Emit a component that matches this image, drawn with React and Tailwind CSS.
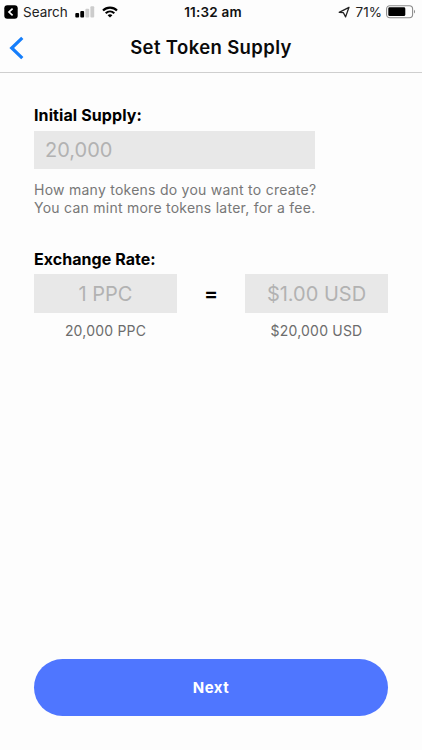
import { useState } from "react";

function SignalIcon() {
  return (
    <svg width="20" height="12" viewBox="0 0 20 12">
      <rect x="0.3" y="7" width="3.8" height="4.6" rx="1" fill="#000" />
      <rect x="5.3" y="5" width="3.8" height="6.6" rx="1" fill="#000" />
      <rect x="10.4" y="2.7" width="3.8" height="8.9" rx="1" fill="#ccc" />
      <rect x="15.4" y="0.3" width="3.8" height="11.3" rx="1" fill="#ccc" />
    </svg>
  );
}

function WifiIcon() {
  return (
    <svg width="16" height="12" viewBox="0 0 16 12" fill="none" stroke="#000" strokeWidth="2.1">
      <path d="M1 4.6 C4.9 0.6 11.1 0.6 15 4.6" />
      <path d="M3.7 7.3 C6.2 4.9 9.8 4.9 12.3 7.3" />
      <path d="M5.6 9.2 C7 7.9 9 7.9 10.4 9.2 L8 11.6 Z" fill="#000" stroke="none" />
    </svg>
  );
}

function BatteryIcon() {
  return (
    <svg width="30" height="14" viewBox="0 0 30 14">
      <rect x="0.6" y="0.7" width="26" height="12" rx="3.2" fill="none" stroke="#8c8c8c" strokeWidth="1.1" />
      <rect x="2.3" y="2.3" width="17" height="8.8" rx="1.4" fill="#000" />
      <path d="M28 4.8 C29.4 5.4 29.4 8 28 8.6 Z" fill="#8c8c8c" />
    </svg>
  );
}

function StatusBar() {
  return (
    <div className="grid h-6 grid-cols-3 items-center text-[13.5px] leading-6 text-black">
      <div className="flex items-center pl-[4px]">
        <svg width="14" height="14" viewBox="0 0 14 14">
          <rect x="0.3" y="0.3" width="13.4" height="13.4" rx="3" fill="#000" />
          <path d="M8.6 3.6 L5 7 L8.6 10.4" fill="none" stroke="#fff" strokeWidth="1.7" />
        </svg>
        <span className="ml-[5px] w-[52px] text-[#222]">Search</span>
        <SignalIcon />
        <span className="ml-[7px]">
          <WifiIcon />
        </span>
      </div>
      <div className="pl-[4px] text-center font-semibold tracking-[0.2px] text-[#111]">11:32 am</div>
      <div className="flex items-center justify-end pr-[6px]">
        <svg width="12" height="12" viewBox="0 0 12 12" fill="none" stroke="#222" strokeWidth="1.3" strokeLinejoin="round">
          <path d="M11 1.3 L1.2 6.3 L5.4 6.7 L7.6 10.9 Z" />
        </svg>
        <span className="mr-[4px] ml-[6px] text-[#222]">71%</span>
        <BatteryIcon />
      </div>
    </div>
  );
}

export default function App() {
  const [supply, setSupply] = useState("");
  const [tokens, setTokens] = useState("");
  const [price, setPrice] = useState("");

  return (
    <div className="flex h-[750px] w-[422px] flex-col bg-[#fdfdfd] font-['Inter','Liberation_Sans',sans-serif]">
      <StatusBar />

      <header className="grid h-[49px] grid-cols-[40px_1fr_40px] items-center border-b border-[#cfcfcf]">
        <button className="pl-[9px]" aria-label="Back">
          <svg width="16" height="24" viewBox="0 0 16 24">
            <path d="M13.3 1.8 L2.7 12 L13.3 22.2" fill="none" stroke="#157efb" strokeWidth="3.2" />
          </svg>
        </button>
        <h1 className="text-center text-[18.5px] font-semibold tracking-[0.38px] text-[#0a0a0a]">
          Set Token Supply
        </h1>
      </header>

      <main className="flex-1 px-[34px] pt-[31px]">
        <label className="block text-[16px] leading-[22px] font-bold tracking-[0.1px] text-black">
          Initial Supply:
        </label>
        <input
          className="mt-[5px] block h-[38px] w-[281px] bg-[#e8e8e8] px-[11px] text-[20px] text-[#555] outline-none placeholder:text-[#b2b2b2]"
          placeholder="20,000"
          value={supply}
          onChange={(e) => setSupply(e.target.value)}
        />
        <p className="mt-3 text-[14px] leading-[17.5px] tracking-[0.25px] whitespace-nowrap text-[#777]">
          How many tokens do you want to create?
          <br />
          You can mint more tokens later, for a fee.
        </p>

        <label className="mt-8 block text-[16px] leading-[22px] font-bold tracking-[0.05px] text-black">
          Exchange Rate:
        </label>
        <div className="mt-[4px] grid grid-cols-[143px_1fr_143px] items-center text-center">
          <input
            className="h-[39px] w-full bg-[#e8e8e8] text-center text-[20px] text-[#555] outline-none placeholder:text-[#b2b2b2]"
            placeholder="1 PPC"
            value={tokens}
            onChange={(e) => setTokens(e.target.value)}
          />
          <span className="text-[21px] font-semibold text-black">=</span>
          <input
            className="h-[39px] w-full bg-[#e8e8e8] text-center text-[20px] text-[#555] outline-none placeholder:text-[#b2b2b2]"
            placeholder="$1.00 USD"
            value={price}
            onChange={(e) => setPrice(e.target.value)}
          />
        </div>
        <div className="mt-[8px] flex justify-between text-center text-[14px] leading-5 tracking-[0.2px] text-[#6c6c6c]">
          <span className="w-[143px]">20,000 PPC</span>
          <span className="w-[143px]">$20,000 USD</span>
        </div>
      </main>

      <footer className="px-[34px] pb-[34px]">
        <button className="h-[57px] w-full rounded-full bg-[#4f76ff] pt-[2px] text-[15px] font-bold tracking-[0.5px] text-white">
          Next
        </button>
      </footer>
    </div>
  );
}
